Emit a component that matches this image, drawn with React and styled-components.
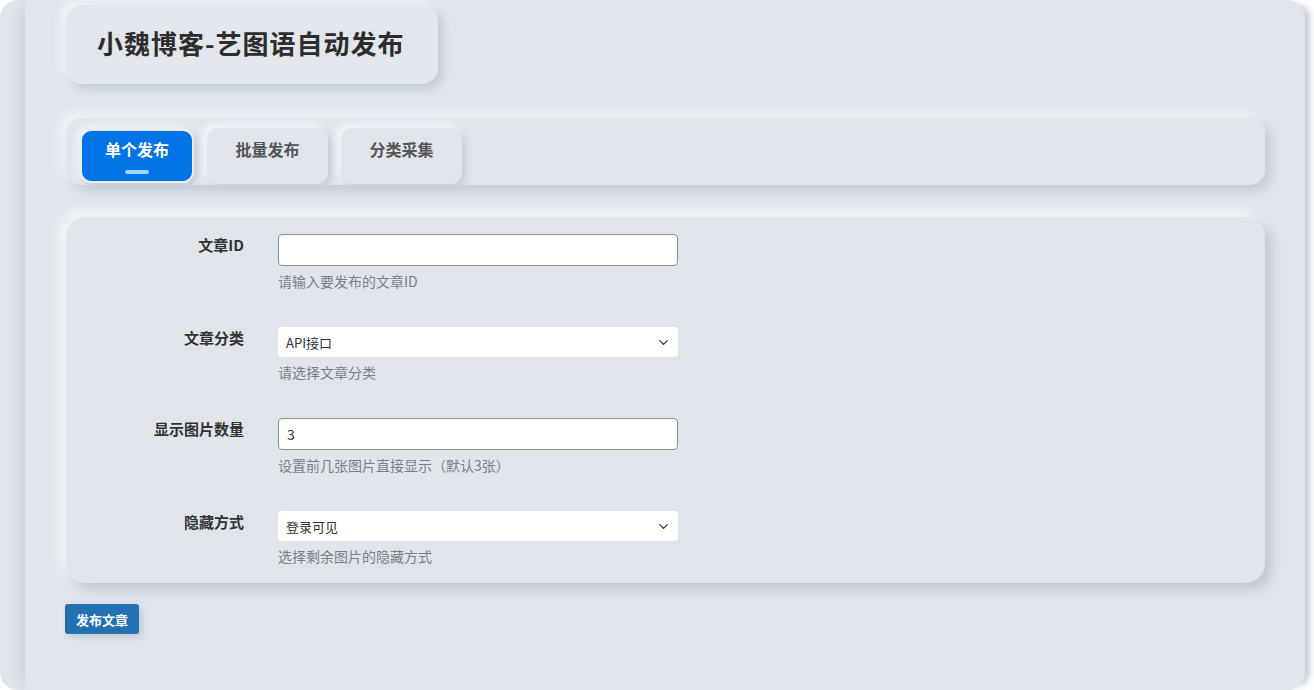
import React, { useState } from "react";
import styled, { createGlobalStyle } from "styled-components";
import { ChevronDown } from "lucide-react";

const GlobalStyle = createGlobalStyle`
    * { box-sizing: border-box; }
    body {
        margin: 0;
        background: #ffffff;
        font-family: "Noto Sans CJK SC", "Noto Sans", sans-serif;
        color: #333;
    }
`;

const TABS = ["单个发布", "批量发布", "分类采集"];

const FIELDS = [
    { label: "文章ID", type: "input", value: "", desc: "请输入要发布的文章ID" },
    { label: "文章分类", type: "select", value: "API接口", desc: "请选择文章分类" },
    { label: "显示图片数量", type: "input", value: "3", desc: "设置前几张图片直接显示（默认3张）" },
    { label: "隐藏方式", type: "select", value: "登录可见", desc: "选择剩余图片的隐藏方式" },
];

const App = () => {
    const [active, setActive] = useState(0);

    return (
        <>
            <GlobalStyle />
            <Wrap>
                <Content>
                    <TitleCard>
                        <h1>小魏博客-艺图语自动发布</h1>
                    </TitleCard>

                    <TabBar>
                        {TABS.map((t, i) => (
                            <Tab
                                key={t}
                                $active={i === active}
                                onClick={() => setActive(i)}
                            >
                                {t}
                            </Tab>
                        ))}
                    </TabBar>

                    <FormCard>
                        {FIELDS.map((f) => (
                            <Row key={f.label}>
                                <Label>{f.label}</Label>
                                <Field>
                                    {f.type === "input" ? (
                                        <TextInput defaultValue={f.value} />
                                    ) : (
                                        <SelectBox>
                                            <select defaultValue={f.value}>
                                                <option>{f.value}</option>
                                            </select>
                                            <ChevronDown className="chev" size={15} strokeWidth={2} />
                                        </SelectBox>
                                    )}
                                    <Desc>{f.desc}</Desc>
                                </Field>
                            </Row>
                        ))}
                    </FormCard>

                    <SubmitBtn>发布文章</SubmitBtn>
                </Content>
            </Wrap>
        </>
    );
};

export default App;

const Wrap = styled.div`
    width: 1305px;
    height: 690px;
    background: #e0e5ec;
    border-radius: 18px;
    box-shadow: 9px 0 6px -4px #c6ccd5;
    overflow: hidden;
    padding-left: 25px;
`;

const Content = styled.div`
    height: 100%;
    padding: 5px 40px 0 41px;
    box-shadow: -10px 0 14px -6px rgba(190, 198, 210, 0.7);
`;

const TitleCard = styled.div`
    display: inline-flex;
    align-items: center;
    height: 79px;
    padding: 0 33px 4px 31px;
    background: #e2e6ed;
    border-radius: 16px;
    box-shadow: 5px 5px 10px #c3cad5, -5px -5px 10px #f1f4f8;
    h1 {
        margin: 0;
        font-size: 26px;
        font-weight: 700;
        color: #2d2d2d;
        letter-spacing: 1px;
    }
`;

const TabBar = styled.div`
    display: flex;
    gap: 13px;
    margin-top: 34px;
    height: 67px;
    padding: 10px 14px;
    background: #e0e5ec;
    border-radius: 15px;
    box-shadow: 6px 6px 12px #c5cbd5, -6px -6px 12px #f0f3f7;
`;

const Tab = styled.button`
    position: relative;
    width: ${(p) => (p.$active ? "114px" : "121px")};
    height: ${(p) => (p.$active ? "54px" : "56px")};
    margin-top: ${(p) => (p.$active ? "1px" : "0")};
    border: ${(p) => (p.$active ? "2px solid #e9eef6" : "none")};
    border-radius: 11px;
    background: ${(p) => (p.$active ? "#0073e6" : "#e0e5ec")};
    color: ${(p) => (p.$active ? "#fff" : "#555")};
    font-family: inherit;
    font-size: 16px;
    font-weight: 700;
    padding: 0 0 15px;
    cursor: pointer;
    box-shadow: ${(p) =>
        p.$active
            ? "3px 3px 6px #c3cad4, -3px -3px 6px #f2f5f9"
            : "4px 4px 7px #c8ced8, -4px -4px 7px #f2f5f9"};
    &::after {
        content: "";
        display: ${(p) => (p.$active ? "block" : "none")};
        position: absolute;
        left: 50%;
        bottom: 7px;
        width: 24px;
        height: 4px;
        margin-left: -12px;
        border-radius: 2px;
        background: #a5d4ff;
    }
`;

const FormCard = styled.div`
    margin-top: 32px;
    padding: 17px 0 17px;
    background: #e0e5ec;
    border-radius: 20px;
    box-shadow: 7px 7px 12px #c3c9d3, -7px -7px 12px #f1f4f8;
    display: flex;
    flex-direction: column;
    gap: 36px;
`;

const Row = styled.div`
    display: grid;
    grid-template-columns: 178px 400px;
    column-gap: 34px;
    align-items: start;
`;

const Label = styled.label`
    text-align: right;
    font-size: 15px;
    font-weight: 700;
    line-height: 22px;
    color: #333;
`;

const Field = styled.div`
    display: flex;
    flex-direction: column;
`;

const TextInput = styled.input`
    width: 400px;
    height: 32px;
    border: 1px solid #8c8f94;
    border-radius: 4px;
    background: #fff;
    padding: 0 8px;
    font-family: inherit;
    font-size: 14px;
    color: #333;
    outline: none;
`;

const SelectBox = styled.div`
    position: relative;
    width: 400px;
    height: 30px;
    select {
        width: 100%;
        height: 100%;
        border: none;
        border-radius: 4px;
        background: #fff;
        padding: 0 8px;
        font-family: inherit;
        font-size: 13px;
        color: #2c3338;
        appearance: none;
        outline: none;
    }
    .chev {
        position: absolute;
        right: 7px;
        top: 8px;
        color: #2c3338;
        pointer-events: none;
    }
`;

const Desc = styled.p`
    margin: 5px 0 0;
    font-size: 14px;
    line-height: 20px;
    color: #7a7f87;
`;

const SubmitBtn = styled.button`
    margin-top: 21px;
    margin-left: -1px;
    width: 74px;
    height: 30px;
    border: none;
    border-radius: 3px;
    background: #2271b1;
    color: #fff;
    font-family: inherit;
    font-size: 13px;
    font-weight: 700;
    box-shadow: 3px 3px 6px #c2c8d2;
    cursor: pointer;
`;
